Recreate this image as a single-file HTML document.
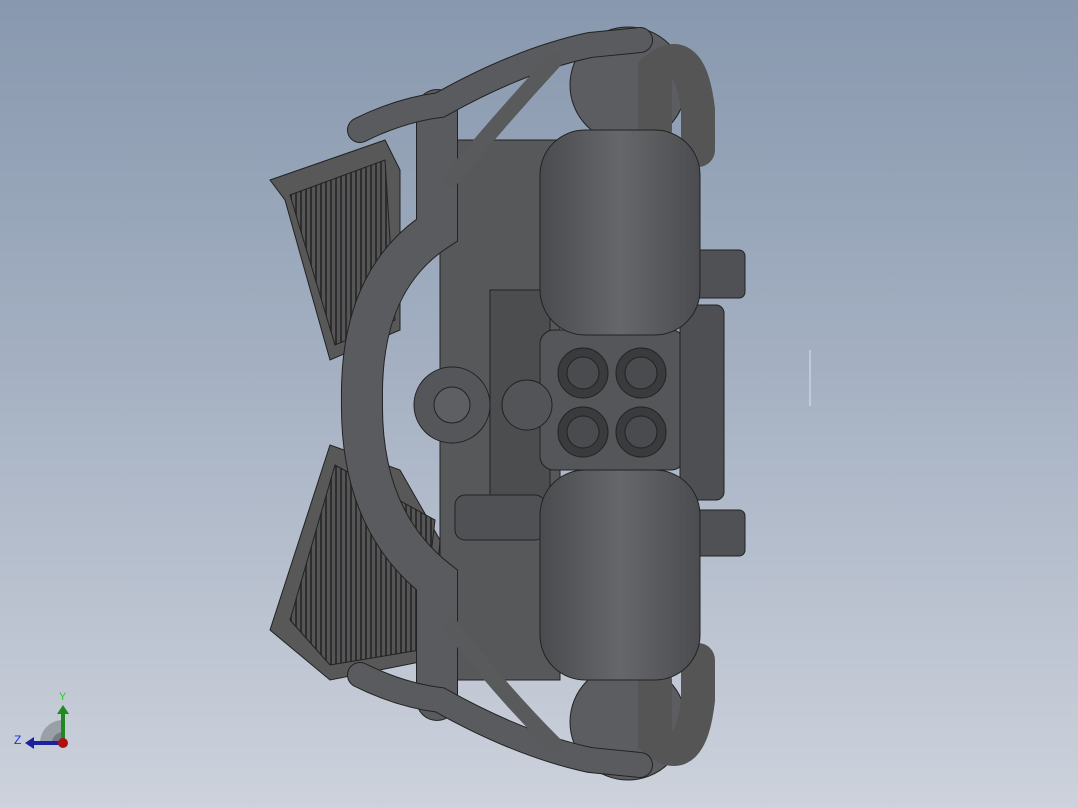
<!DOCTYPE html>
<html><head><style>
html,body{margin:0;padding:0;width:1078px;height:808px;overflow:hidden}
body{background:linear-gradient(#8898ae 0%,#a4b0c2 45%,#cdd2dc 100%)}
svg{position:absolute;left:0;top:0}
</style></head><body>
<svg width="1078" height="808" viewBox="0 0 1078 808" font-family="Liberation Sans, sans-serif">
<defs>
<linearGradient id="g" x1="0" x2="1"><stop offset="0" stop-color="#4a4b4e"/><stop offset="0.5" stop-color="#66676a"/><stop offset="1" stop-color="#4b4c4f"/></linearGradient>
<pattern id="fins" width="5" height="5" patternUnits="userSpaceOnUse"><rect width="5" height="5" fill="#555"/><rect width="2" height="5" fill="#2e2e30"/></pattern>
</defs>
<g stroke="#222" stroke-width="1">
<!-- radiators -->
<polygon points="270,180 385,140 400,170 400,330 330,360 285,200" fill="#585859"/>
<polygon points="290,195 385,160 395,320 335,345" fill="url(#fins)"/>
<polygon points="270,630 330,445 400,470 440,540 430,660 330,680" fill="#585859"/>
<polygon points="290,620 335,465 435,520 420,650 330,665" fill="url(#fins)"/>
<!-- central block -->
<rect x="440" y="140" width="120" height="540" fill="#57585a"/>
<rect x="490" y="290" width="60" height="230" fill="#4c4d4f"/>
<rect x="540" y="330" width="145" height="140" rx="14" fill="#555659"/>
<!-- right box -->
<rect x="680" y="305" width="44" height="195" rx="8" fill="#4e4f52"/>
<!-- right cylinders -->
<rect x="683" y="250" width="62" height="48" rx="6" fill="#505154"/>
<rect x="683" y="510" width="62" height="46" rx="6" fill="#505154"/>
<rect x="455" y="495" width="90" height="45" rx="10" fill="#505154"/>
<!-- turbos -->
<circle cx="628" cy="85" r="58" fill="#5c5d60"/>
<circle cx="628" cy="722" r="58" fill="#5c5d60"/>
<path d="M655,130 L655,70 Q690,40 698,110 L698,150" fill="none" stroke="#555" stroke-width="34" stroke-linecap="round"/>
<path d="M655,680 L655,740 Q690,770 698,700 L698,660" fill="none" stroke="#555" stroke-width="34" stroke-linecap="round"/>
<!-- tanks -->
<rect x="540" y="130" width="160" height="205" rx="45" fill="url(#g)"/>
<rect x="540" y="470" width="160" height="210" rx="45" fill="url(#g)"/>
<!-- four ports -->
<g fill="#3a3b3d"><circle cx="583" cy="373" r="25"/><circle cx="641" cy="373" r="25"/><circle cx="583" cy="432" r="25"/><circle cx="641" cy="432" r="25"/></g>
<g fill="#4a4b4e"><circle cx="583" cy="373" r="16"/><circle cx="641" cy="373" r="16"/><circle cx="583" cy="432" r="16"/><circle cx="641" cy="432" r="16"/></g>
<!-- pulley -->
<circle cx="452" cy="405" r="38" fill="#555659"/>
<circle cx="452" cy="405" r="18" fill="#5e5f62"/>
<circle cx="527" cy="405" r="25" fill="#535457"/>
</g>
<!-- pipes -->
<g fill="none" stroke-linecap="round">
<path d="M437,110 L437,230 Q360,280 362,400 Q360,520 437,580 L437,700" stroke="#222" stroke-width="42"/>
<path d="M437,110 L437,230 Q360,280 362,400 Q360,520 437,580 L437,700" stroke="#5a5b5e" stroke-width="40"/>
<path d="M360,130 Q400,110 440,105 Q520,60 590,45 L640,40" stroke="#222" stroke-width="26"/>
<path d="M360,130 Q400,110 440,105 Q520,60 590,45 L640,40" stroke="#5a5b5e" stroke-width="24"/>
<path d="M360,675 Q400,695 440,700 Q520,745 590,760 L640,765" stroke="#222" stroke-width="26"/>
<path d="M360,675 Q400,695 440,700 Q520,745 590,760 L640,765" stroke="#5a5b5e" stroke-width="24"/>
<path d="M450,180 Q500,120 555,60" stroke="#585a5c" stroke-width="16"/>
<path d="M450,625 Q500,690 555,745" stroke="#585a5c" stroke-width="16"/>
</g>
<line x1="810" y1="350" x2="810" y2="406" stroke="#dfe3ea" stroke-width="1"/>
<!-- triad -->
<path d="M40,743 A23,23 0 0 1 63,720 L63,743 Z" fill="#9aa0a8"/>
<path d="M52,743 A11,11 0 0 1 63,732 L63,743 Z" fill="#777c84"/>
<rect x="61" y="712" width="4" height="31" fill="#1f8a1f"/>
<polygon points="57,714 63,705 69,714" fill="#1f8a1f"/>
<rect x="32" y="741" width="31" height="4" fill="#1a22a0"/>
<polygon points="34,737 25,743 34,749" fill="#1a22a0"/>
<circle cx="63" cy="743" r="5" fill="#b01010"/>
<text x="59" y="700" font-size="11" fill="#1ad61a">Y</text>
<text x="14" y="744" font-size="12" fill="#2030e0">Z</text>
</svg>
</body></html>
